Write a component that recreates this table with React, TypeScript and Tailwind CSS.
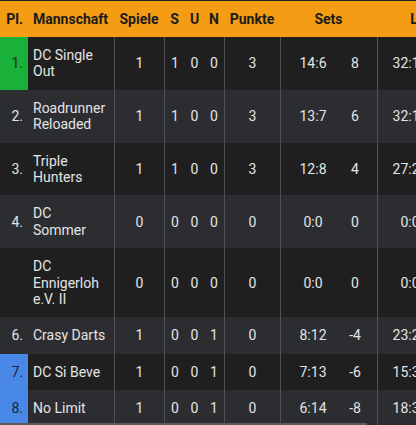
import React from 'react'

interface TeamRow {
  pos: string
  name: string
  games: number
  won: number
  draw: number
  lost: number
  points: number
  sets: string
  setDiff: number
  legs: string
  legDiff: number
  marker?: 'up' | 'down'
}

const rows: TeamRow[] = [
  { pos: '1.', name: 'DC Single Out', games: 1, won: 1, draw: 0, lost: 0, points: 3, sets: '14:6', setDiff: 8, legs: '32:12', legDiff: 20, marker: 'up' },
  { pos: '2.', name: 'Roadrunner Reloaded', games: 1, won: 1, draw: 0, lost: 0, points: 3, sets: '13:7', setDiff: 6, legs: '32:18', legDiff: 14 },
  { pos: '3.', name: 'Triple Hunters', games: 1, won: 1, draw: 0, lost: 0, points: 3, sets: '12:8', setDiff: 4, legs: '27:23', legDiff: 4 },
  { pos: '4.', name: 'DC Sommer', games: 0, won: 0, draw: 0, lost: 0, points: 0, sets: '0:0', setDiff: 0, legs: '0:0', legDiff: 0 },
  { pos: '', name: 'DC Ennigerloh e.V. II', games: 0, won: 0, draw: 0, lost: 0, points: 0, sets: '0:0', setDiff: 0, legs: '0:0', legDiff: 0 },
  { pos: '6.', name: 'Crasy Darts', games: 1, won: 0, draw: 0, lost: 1, points: 0, sets: '8:12', setDiff: -4, legs: '23:27', legDiff: -4 },
  { pos: '7.', name: 'DC Si Beve', games: 1, won: 0, draw: 0, lost: 1, points: 0, sets: '7:13', setDiff: -6, legs: '15:30', legDiff: -15, marker: 'down' },
  { pos: '8.', name: 'No Limit', games: 1, won: 0, draw: 0, lost: 1, points: 0, sets: '6:14', setDiff: -8, legs: '18:35', legDiff: -17, marker: 'down' },
]

// Pl | Mannschaft | Spiele | S | U | N | Punkte | Sets (2) | Legs (2)
const gridCols = 'grid grid-cols-[28px_86px_50px_21px_19px_20px_56px_65px_32px_65px_32px]'

function markerClass(marker?: TeamRow['marker']) {
  if (marker === 'up') return 'bg-[#19b13a] text-[#1d2a22]'
  if (marker === 'down') return 'bg-[#4a88e8] text-[#1b2438]'
  return ''
}

export default function App(): React.JSX.Element {
  return (
    <div className="relative h-[425px] w-[416px] overflow-hidden bg-[#1f1f1f] font-['Roboto','Liberation_Sans',sans-serif] text-[14px] leading-[16.4px]">
      <div className="w-[475px]">
        {/* Header */}
        <div className={`${gridCols} h-[37px] border-t border-[#232323] bg-[#f39c14] font-bold text-[#1b1b1b]`}>
          <div className="flex items-center justify-end pr-[5px]">Pl.</div>
          <div className="flex items-center pl-[5px]">Mannschaft</div>
          <div className="flex items-center justify-center">Spiele</div>
          <div className="flex items-center justify-center">S</div>
          <div className="flex items-center justify-center">U</div>
          <div className="flex items-center justify-center">N</div>
          <div className="flex items-center justify-center">Punkte</div>
          <div className="col-span-2 flex items-center justify-center">Sets</div>
          <div className="col-span-2 flex items-center justify-center">Legs</div>
        </div>

        {/* Body */}
        {rows.map((row, i) => (
          <div
            key={row.name}
            className={`${gridCols} text-[#e4e4e4] ${i % 2 === 0 ? 'bg-[#1f1f1f]' : 'bg-[#2c2d31]'}`}
          >
            <div className={`flex items-center justify-end pr-[5px] ${markerClass(row.marker)}`}>{row.pos}</div>
            <div className="py-[10px] pl-[5px] pr-[7px]">{row.name}</div>
            <div className="flex items-center justify-center border-l border-[#505155]">{row.games}</div>
            <div className="flex items-center justify-center border-l border-[#505155]">{row.won}</div>
            <div className="flex items-center justify-center">{row.draw}</div>
            <div className="flex items-center justify-center">{row.lost}</div>
            <div className="flex items-center justify-center border-l border-[#505155]">{row.points}</div>
            <div className="flex items-center justify-center border-l border-[#505155]">{row.sets}</div>
            <div className="flex items-center justify-center pr-[12px]">{row.setDiff}</div>
            <div className="flex items-center justify-center border-l border-[#505155]">{row.legs}</div>
            <div className="flex items-center justify-center pr-[12px]">{row.legDiff}</div>
          </div>
        ))}
      </div>

      {/* horizontal scroll indicator */}
      <div className="absolute bottom-0 left-0 h-[2px] w-[367px] bg-[#5a5b5f]" />
    </div>
  )
}
